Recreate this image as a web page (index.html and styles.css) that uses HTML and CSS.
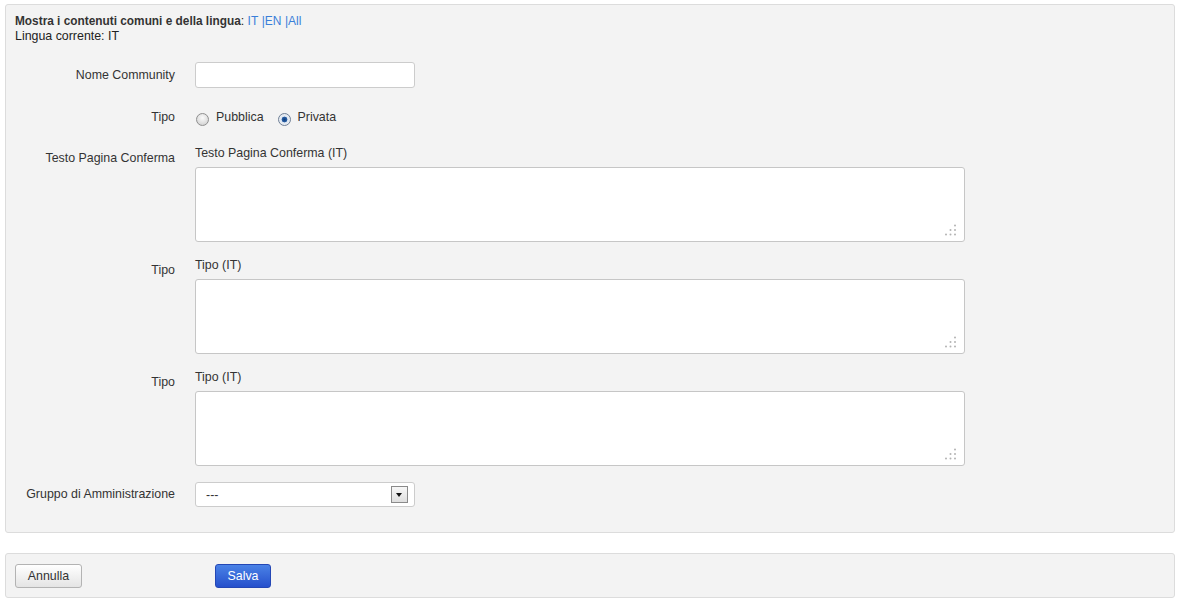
FILE: index.html
```html
<!DOCTYPE html>
<html lang="it">
<head>
<meta charset="UTF-8">
<meta name="viewport" content="width=device-width, initial-scale=1.0">
<title>Community</title>
<link rel="stylesheet" href="styles.css">
</head>
<body>
<div class="panel form-panel">
  <div class="lang-info">
    <div><b>Mostra i contenuti comuni e della lingua</b>: <a href="#">IT</a> <a href="#">|EN</a> <a href="#">|All</a></div>
    <div>Lingua corrente: IT</div>
  </div>

  <div class="row">
    <label class="row-label" for="nome">Nome Community</label>
    <div class="row-field"><input class="text-input" id="nome" type="text"></div>
  </div>

  <div class="row row-radio">
    <span class="row-label">Tipo</span>
    <div class="row-field radios">
      <label><input type="radio" name="tipo"> Pubblica</label>
      <label><input type="radio" name="tipo" checked> Privata</label>
    </div>
  </div>

  <div class="row row-area">
    <span class="row-label">Testo Pagina Conferma</span>
    <div class="row-field">
      <div class="sub-label">Testo Pagina Conferma (IT)</div>
      <div class="area-wrap">
        <textarea class="text-area"></textarea>
        <svg class="grip" width="12" height="12" viewBox="0 0 12 12"><circle cx="10" cy="1.5" r="1"/><circle cx="5.5" cy="6" r="1"/><circle cx="10" cy="6" r="1"/><circle cx="1" cy="10.5" r="1"/><circle cx="5.5" cy="10.5" r="1"/><circle cx="10" cy="10.5" r="1"/></svg>
      </div>
    </div>
  </div>

  <div class="row row-area">
    <span class="row-label">Tipo</span>
    <div class="row-field">
      <div class="sub-label">Tipo (IT)</div>
      <div class="area-wrap">
        <textarea class="text-area"></textarea>
        <svg class="grip" width="12" height="12" viewBox="0 0 12 12"><circle cx="10" cy="1.5" r="1"/><circle cx="5.5" cy="6" r="1"/><circle cx="10" cy="6" r="1"/><circle cx="1" cy="10.5" r="1"/><circle cx="5.5" cy="10.5" r="1"/><circle cx="10" cy="10.5" r="1"/></svg>
      </div>
    </div>
  </div>

  <div class="row row-area">
    <span class="row-label">Tipo</span>
    <div class="row-field">
      <div class="sub-label">Tipo (IT)</div>
      <div class="area-wrap">
        <textarea class="text-area"></textarea>
        <svg class="grip" width="12" height="12" viewBox="0 0 12 12"><circle cx="10" cy="1.5" r="1"/><circle cx="5.5" cy="6" r="1"/><circle cx="10" cy="6" r="1"/><circle cx="1" cy="10.5" r="1"/><circle cx="5.5" cy="10.5" r="1"/><circle cx="10" cy="10.5" r="1"/></svg>
      </div>
    </div>
  </div>

  <div class="row row-last">
    <label class="row-label" for="gruppo">Gruppo di Amministrazione</label>
    <div class="row-field">
      <div class="select-wrap">
        <select class="select" id="gruppo"><option>---</option></select>
        <span class="select-arrow"></span>
      </div>
    </div>
  </div>
</div>

<div class="panel button-panel">
  <button class="btn">Annulla</button>
  <button class="btn btn-primary">Salva</button>
</div>
</body>
</html>
```

FILE: styles.css
```css
body {
  margin: 0;
  padding: 4px 6px 0 5px;
  font-family: "Liberation Sans", Arial, sans-serif;
  font-size: 12.4px;
  color: #333;
  background-color: #fff;
}
.panel {
  background-color: #f3f3f3;
  border: 1px solid #dcdcdc;
  border-radius: 3px;
}
.form-panel {
  padding: 9px 9px 25px 9px;
}
.lang-info {
  line-height: 15px;
  margin-bottom: 18px;
  color: #222;
}
.lang-info b {
  color: #333;
  font-size: 11.85px;
}
.lang-info a {
  color: #3a7fd9;
  font-size: 12px;
  text-decoration: none;
}
.row {
  display: flex;
  margin-bottom: 18px;
}
.row-label {
  width: 160px;
  margin-right: 20px;
  text-align: right;
  line-height: 26px;
  flex-shrink: 0;
}
.row-field {
  flex: 1;
}
.text-input {
  box-sizing: border-box;
  width: 220px;
  height: 26px;
  border: 1px solid #ccc;
  border-radius: 3px;
  background: #fff;
  margin: 0;
  font: inherit;
}
.row-radio {
  height: 24px;
  margin-bottom: 16px;
}
.row-radio .row-label {
  line-height: 22px;
}
.radios {
  display: flex;
  line-height: 22px;
}
.radios label {
  display: flex;
  align-items: flex-start;
  margin-right: 13px;
}
.radios input {
  appearance: none;
  -webkit-appearance: none;
  width: 13px;
  height: 13px;
  margin: 7px 7px 0 1px;
  border: 1px solid #8f8f8f;
  border-radius: 50%;
  background: radial-gradient(circle at 50% 35%, #fbfbfb 0%, #dedede 60%, #c8c8c8 100%);
  box-sizing: border-box;
}
.radios input:checked {
  border-color: #6f7f96;
  background: radial-gradient(circle, #0f3f7c 0, #2a5fa6 2.6px, #dfe7f1 3.2px, #f4f4f4 100%);
}
.row-area {
  margin-bottom: 16px;
}
.row-area .row-label {
  line-height: 14px;
  padding-top: 5px;
}
.sub-label {
  line-height: 14px;
  margin-bottom: 7px;
}
.area-wrap {
  position: relative;
  width: 770px;
  height: 75px;
}
.text-area {
  box-sizing: border-box;
  display: block;
  width: 770px;
  height: 75px;
  margin: 0;
  border: 1px solid #c6c6c6;
  border-radius: 3px;
  background: #fff;
  resize: none;
  font: inherit;
}
.grip {
  position: absolute;
  right: 8px;
  bottom: 6px;
  fill: #b3b3b3;
}
.row-last {
  margin-top: 3px;
  margin-bottom: 0;
}
.row-last .row-label {
  line-height: 25px;
}
.select-wrap {
  position: relative;
  width: 220px;
  height: 25px;
}
.select {
  appearance: none;
  -webkit-appearance: none;
  box-sizing: border-box;
  width: 220px;
  height: 25px;
  margin: 0;
  padding: 0 0 0 10px;
  border: 1px solid #ccc;
  border-radius: 3px;
  background: #fff;
  font: inherit;
  color: #333;
}
.select-arrow {
  position: absolute;
  right: 7px;
  top: 4px;
  width: 15px;
  height: 15px;
  border: 1px solid #8a8a8a;
  background: linear-gradient(#f7f7f7, #dedede);
  pointer-events: none;
}
.select-arrow::after {
  content: "";
  position: absolute;
  left: 4px;
  top: 6px;
  border-left: 3.5px solid transparent;
  border-right: 3.5px solid transparent;
  border-top: 4px solid #111;
}
.button-panel {
  margin-top: 20px;
  padding: 10px 9px 9px 9px;
  display: flex;
}
.btn {
  box-sizing: border-box;
  height: 24px;
  width: 67px;
  margin: 0;
  padding: 0;
  border: 1px solid #b3b3b3;
  border-radius: 3px;
  background: linear-gradient(#ffffff, #e4e4e4);
  font-family: "Liberation Sans", Arial, sans-serif;
  font-size: 12.4px;
  color: #333;
  cursor: pointer;
}
.btn-primary {
  width: 56px;
  margin-left: 133px;
  border-color: #2447b5;
  background: linear-gradient(#4a82e6, #2650cc);
  color: #fff;
}
```
